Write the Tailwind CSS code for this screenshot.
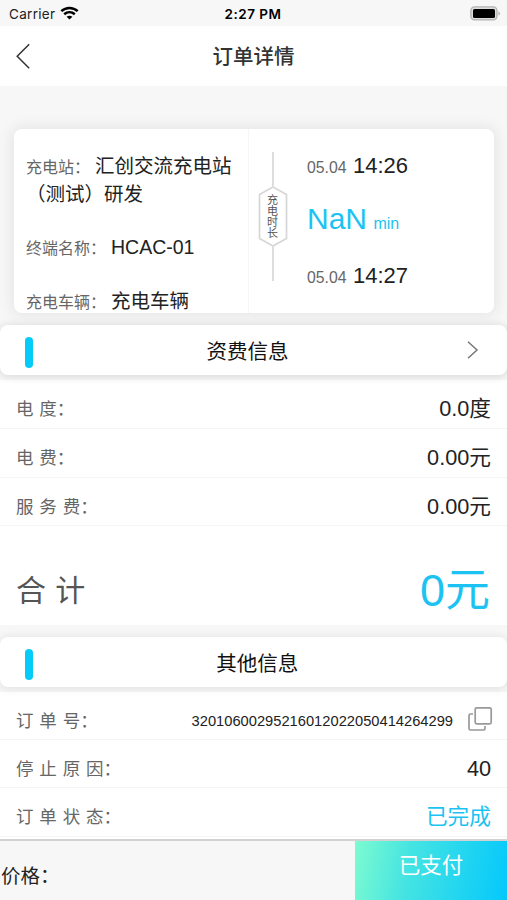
<!DOCTYPE html>
<html lang="zh-CN">
<head>
<meta charset="utf-8">
<title>订单详情</title>
<script src="https://cdn.jsdelivr.net/npm/@tailwindcss/browser@4"></script>
</head>
<body class="bg-[#f7f7f7]">
<div class="flex h-[900px] w-[507px] flex-col overflow-hidden bg-[#f7f7f7] font-['Liberation_Sans','Noto_Sans_CJK_SC',sans-serif] text-[#222]">

  <!-- status bar -->
  <div class="grid h-[26px] shrink-0 grid-cols-3 items-center pr-[7px] pl-[9px] font-['Inter',sans-serif] text-[13.5px] text-[#222]">
    <div class="flex items-center gap-[5px] pt-[2px]">
      <span class="tracking-[0.3px]">Carrier</span>
      <svg class="-mt-[2px] h-[14px] w-[19px]" viewBox="0 0 19 14" fill="none" stroke="#000" stroke-width="2.5">
        <path d="M1.3 5.2C6 .9 13 .9 17.7 5.2"/>
        <path d="M4.2 8.3C7.3 5.6 11.7 5.6 14.8 8.3"/>
        <path d="M9.5 13.6L6.6 10.7C8.3 9.3 10.7 9.3 12.4 10.7Z" fill="#000" stroke="none"/>
      </svg>
    </div>
    <div class="pt-[2px] pr-[3px] text-center font-semibold tracking-[0.5px] text-black">2:27 PM</div>
    <div class="flex justify-end">
      <svg class="h-[15px] w-[30px]" viewBox="0 0 30 15">
        <rect x=".9" y=".9" width="26" height="13" rx="3.6" fill="#ddd" stroke="#b3b3b3" stroke-width="1.4"/>
        <rect x="3" y="3" width="22" height="9" rx="1.5" fill="#000"/>
        <path d="M28.4 5.2C30.4 6 30.4 8.8 28.4 9.6Z" fill="#b3b3b3"/>
      </svg>
    </div>
  </div>

  <!-- navigation bar -->
  <div class="grid h-[60px] shrink-0 grid-cols-[100px_1fr_100px] items-center bg-white">
    <svg class="-mt-[1px] ml-[15px] h-[26px] w-[16px]" viewBox="0 0 16 26" fill="none" stroke="#333" stroke-width="1.5"><path d="M14.2 1.3L2.2 13.3L14.2 25.2"/></svg>
    <h1 class="pt-[2px] text-center text-[20.5px] font-medium text-[#333]">订单详情</h1>
  </div>

  <!-- station card -->
  <div class="mr-[13px] ml-[14px] mt-[43px] flex h-[184px] shrink-0 overflow-hidden rounded-[8px] bg-white shadow-[0_0_14px_3px_rgba(0,0,0,0.07)]">
    <div class="w-[235px] shrink-0 border-r border-[#f5f5f5] pt-[24px] pl-[12px] text-[16px] text-[#666]">
      <p class="h-[80px] leading-[27px]">充电站：<span class="ml-[5px] text-[19.5px] text-[#222]">汇创交流充电站<br>（测试）研发</span></p>
      <p class="h-[54px] leading-[28px] whitespace-nowrap">终端名称：<span class="ml-[5px] text-[19.5px] text-[#222]">HCAC-01</span></p>
      <p class="leading-[28px] whitespace-nowrap">充电车辆：<span class="ml-[5px] text-[19.5px] text-[#222]">充电车辆</span></p>
    </div>
    <div class="flex w-[48px] flex-col items-center pt-[23px]">
      <div class="h-[34px] w-[1.5px] bg-[#ddd]"></div>
      <div class="grid h-[61px] w-[30px] place-items-center">
        <svg class="col-start-1 row-start-1 h-[61px] w-[30px]" viewBox="0 0 30 61" fill="#fff" stroke="#d6d6d6" stroke-width="1.7"><path d="M15 1L28.5 8.5V52.5L15 60L1.5 52.5V8.5Z"/></svg>
        <span class="col-start-1 row-start-1 w-[12px] text-[11px] leading-[11px] text-[#555]">充电时长</span>
      </div>
      <div class="h-[34px] w-[1.5px] bg-[#ddd]"></div>
    </div>
    <div class="flex flex-col pt-[21px] pl-[10px] whitespace-nowrap">
      <p class="h-[51px] text-[15.8px] leading-[32px] text-[#666]">05.04 <span class="ml-[2px] text-[22px] text-[#222]">14:26</span></p>
      <p class="h-[59px] text-[16px] leading-[36px] text-[#1cc3f2]"><span class="text-[30px]">NaN</span> <span class="ml-[2px]">min</span></p>
      <p class="text-[15.8px] leading-[32px] text-[#666]">05.04 <span class="ml-[2px] text-[22px] text-[#222]">14:27</span></p>
    </div>
  </div>

  <!-- fee section -->
  <div class="z-10 mt-[12px] grid h-[50px] shrink-0 grid-cols-[60px_1fr_48px] items-center rounded-[8px] bg-white shadow-[0_1px_8px_1px_rgba(0,0,0,0.12)]">
    <div class="mt-[5px] ml-[25px] h-[31px] w-[7.5px] rounded-full bg-[#06caf8]"></div>
    <h2 class="pt-[4px] pr-[24px] text-center text-[20.5px] text-[#111]">资费信息</h2>
    <svg class="ml-[7px] h-[20px] w-[13px]" viewBox="0 0 13 20" fill="none" stroke="#777" stroke-width="1.5"><path d="M2 1.7L11 10L2 18.3"/></svg>
  </div>
  <div class="mt-[5px] h-[245px] shrink-0 bg-white text-[21.7px]">
    <div class="flex h-[49px] items-center justify-between border-b border-[#f5f5f5] pt-[11px] pr-[16px] pl-[16px]"><span class="text-[17.5px] text-[#666] [word-spacing:1px]">电 度：</span><span>0.0度</span></div>
    <div class="flex h-[49px] items-center justify-between border-b border-[#f5f5f5] pt-[11px] pr-[16px] pl-[16px]"><span class="text-[17.5px] text-[#666] [word-spacing:1px]">电 费：</span><span>0.00元</span></div>
    <div class="flex h-[48px] items-center justify-between border-b border-[#f5f5f5] pt-[11px] pr-[16px] pl-[16px]"><span class="text-[17.5px] text-[#666] [word-spacing:1px]">服 务 费：</span><span>0.00元</span></div>
    <div class="flex h-[98px] items-center justify-between pt-[31px] pr-[17px] pl-[16px]"><span class="text-[30px] text-[#555] [word-spacing:1px]">合 计</span><span class="text-[45px] leading-[50px] text-[#1cc3f2]">0元</span></div>
  </div>

  <!-- other information -->
  <div class="z-10 mt-[12px] flex h-[50px] shrink-0 items-center rounded-[8px] bg-white shadow-[0_1px_8px_1px_rgba(0,0,0,0.09)]">
    <div class="mt-[5px] ml-[25px] h-[31px] w-[7.5px] shrink-0 rounded-full bg-[#06caf8]"></div>
    <h2 class="flex-1 pt-[4px] pr-[25px] text-center text-[20.5px] text-[#111]">其他信息</h2>
  </div>
  <div class="mt-[5px] h-[147px] shrink-0 bg-white text-[21.7px]">
    <div class="flex h-[48px] items-center border-b border-[#f5f5f5] pt-[11px] pr-[14px] pl-[16px]">
      <span class="text-[17.5px] text-[#666] [word-spacing:1px]">订 单 号：</span>
      <span class="ml-auto text-[14.7px]">32010600295216012022050414264299</span>
      <svg class="-mt-[5px] ml-[14px] h-[26px] w-[26px]" viewBox="0 0 26 26" fill="none" stroke="#999" stroke-width="1.7"><rect x="8.2" y="1.8" width="16" height="16" rx="1.5"/><path d="M6 8H3.5Q2 8 2 9.5V22.5Q2 24 3.5 24H16.5Q18 24 18 22.5V20"/></svg>
    </div>
    <div class="flex h-[48px] items-center justify-between border-b border-[#f5f5f5] pt-[11px] pr-[16px] pl-[16px]"><span class="text-[17.5px] text-[#666] [word-spacing:1px]">停 止 原 因：</span><span>40</span></div>
    <div class="flex h-[49px] items-center justify-between border-b border-[#f5f5f5] pt-[11px] pr-[16px] pl-[16px]"><span class="text-[17.5px] text-[#666] [word-spacing:1px]">订 单 状 态：</span><span class="text-[#1cc3f2]">已完成</span></div>
  </div>

  <!-- payment bar -->
  <div class="z-20 flex h-[61px] shrink-0 justify-between border-t-2 border-[#d2d2d2] bg-[#f7f7f7]">
    <div class="pt-[20px] pl-[1px] text-[19.5px] leading-[30px] text-[#222]">价格：</div>
    <div class="w-[152px] bg-linear-[100deg,#7dfbd0_0%,#45e4e2_35%,#04c8fc_100%] pt-[9px] text-center text-[21.5px] leading-[32px] text-white">已支付</div>
  </div>
</div>
</body>
</html>
